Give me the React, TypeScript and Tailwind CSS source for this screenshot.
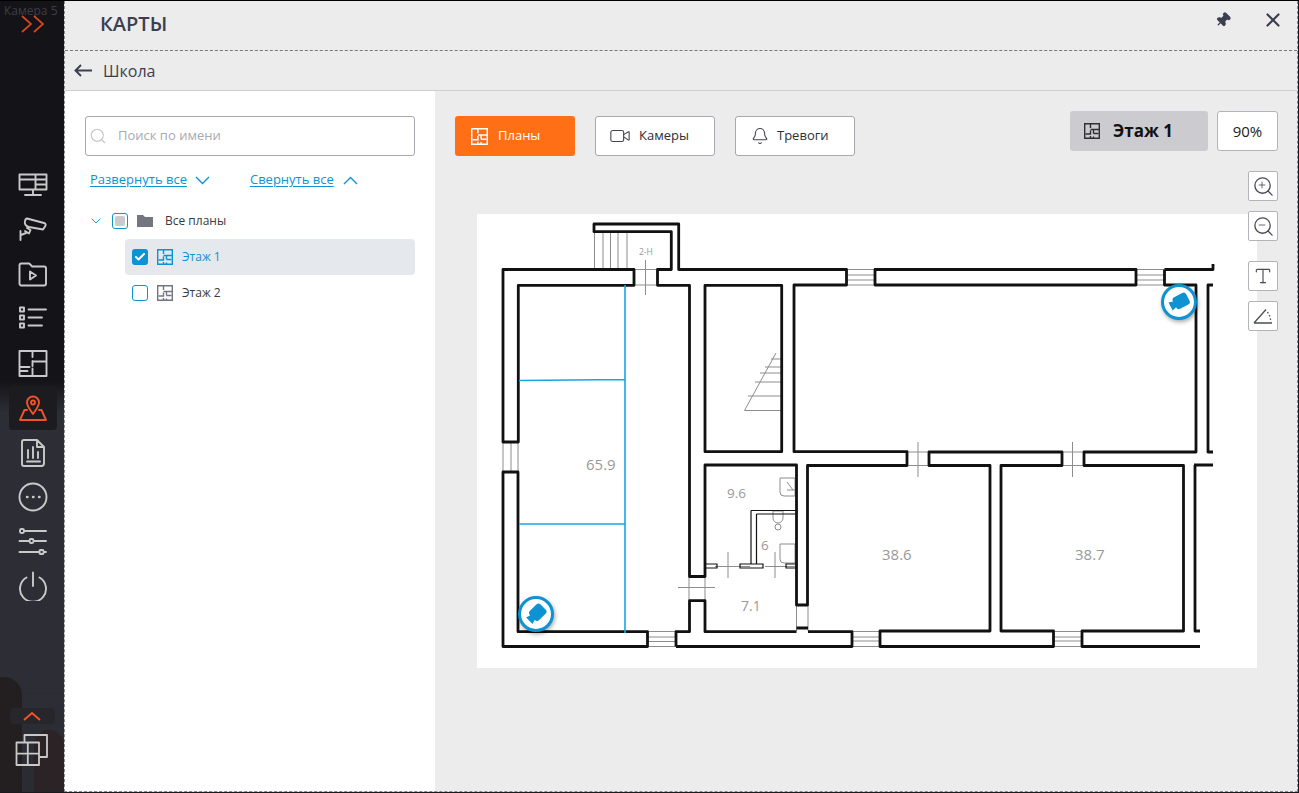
import { Bell, Check, Minus, Pin, Plus, Search, Type, Video, X } from "lucide-react";

const FONT = "font-['Open_Sans','Noto_Sans',sans-serif]";

// small floor plan glyph used on tabs, tree rows and the current plan badge
function PlanIcon({ className }: { className?: string }) {
  return (
    <svg viewBox="0 0 16 16" fill="none" stroke="currentColor" strokeWidth="1.4" className={className}>
      <path d="M.7.7h14.6v14.6H.7z" />
      <path d="M6.5 1v4M6.5 7.5V11H1.5M6.5 13v2M6.5 6.5h8.500M9.500 6.500v4M9.500 10.500h5M9.500 15v-1.500" />
    </svg>
  );
}

function Chevron({ up, className }: { up?: boolean; className?: string }) {
  return (
    <svg viewBox="0 0 15 9" fill="none" stroke="currentColor" strokeWidth="1.4" className={className}>
      <path d={up ? "M1 8l6.500-6.500L14 8" : "M1 1l6.500 6.500L14 1"} />
    </svg>
  );
}

function RailIcon({ children, active }: { children: React.ReactNode; active?: boolean }) {
  return (
    <div className={`flex h-[44.4px] w-12 items-center justify-center rounded ${active ? "bg-[#1b1b20] text-[#f0532a]" : "text-[#c9c9c9]"}`}>
      <svg viewBox="0 0 30 30" fill="none" stroke="currentColor" strokeWidth="1.9" strokeLinecap="round" strokeLinejoin="round" className="h-[30px] w-[30px]">
        {children}
      </svg>
    </div>
  );
}

function Rail() {
  return (
    <aside className="relative flex w-[64px] shrink-0 flex-col items-center overflow-hidden bg-[linear-gradient(180deg,#141418_0%,#141418_48%,#2d2e35_52%,#2d2e35_85%,#2b2c33_100%)]">
      <div className="absolute left-[4px] top-[2px] text-[12px] leading-[16px] text-[#3d3e44]">Камера 5</div>
      <svg viewBox="0 0 24 18" fill="none" stroke="#d9451f" strokeWidth="1.7" className="absolute left-[21px] top-[14px] h-[18px] w-[24px]">
        <path d="M1 1l9 8-9 8M13 1l9 8-9 8" />
      </svg>
      <div className="absolute bottom-0 left-0 h-[115px] w-[22px] rounded-tr-[18px] bg-[#231f20]" />
      <div className="absolute bottom-0 left-[34px] h-[62px] w-[30px] rounded-t-[24px] bg-[#2c2327]" />

      <div className="relative ml-[2px] mt-[163px] flex flex-col items-center">
        <RailIcon>
          <path d="M1.500 3.500h27v15h-27zM17.500 3.500v15M17.500 8.500h11M17.500 13.500h11M1.500 8.500h16M15 18.500v5M7 24h16" />
        </RailIcon>
        <RailIcon>
          <path d="M9 2.500l17 4.500c2 .6 2 2 1 3.500l-2 3-14-2.500c-3-.7-5-3-4-6 .3-1.300 1-2.500 2-2.500zM9 12l3.500 2-1.500 3.500-4-2.500M8 17l-5 2M2.500 15v9" />
        </RailIcon>
        <RailIcon>
          <path d="M1.500 5.500c0-1 .7-2 1.700-2h8l3 3h12c1 0 1.800 1 1.800 2v15c0 1-.8 2-1.800 2H3.200c-1 0-1.700-1-1.700-2zM12 11.500l6 4-6 4z" />
        </RailIcon>
        <RailIcon>
          <path d="M2 3.500h4v4H2zM2 11.500h4v4H2zM2 19.500h4v4H2zM10.500 5.500H28M10.500 13.500H24M10.500 21.500H24" />
        </RailIcon>
        <RailIcon>
          <path d="M1.500 2h27v25h-27zM14.500 2v6M14.500 12v5M14.500 19.500V27M14.500 12.500h14M1.500 18h10M1.500 22h8" />
        </RailIcon>
        <RailIcon active>
          <path d="M15 21c-3-4-6-8-6-11.500a6 6 0 0 1 12 0C21 13 18 17 15 21z" />
          <circle cx="15" cy="9.500" r="2" />
          <path d="M9 17H6.500L2 27h26l-4.500-10H21" />
        </RailIcon>
        <RailIcon>
          <path d="M4 4c0-1 .7-2 2-2h13l7 7v16c0 1.500-1 3-2.500 3H6c-1.300 0-2-1-2-2zM19 2v7h7M10 12v8M15 9v11M20 14v6M9 23.500h13" />
        </RailIcon>
        <RailIcon>
          <circle cx="15" cy="15" r="13.500" />
          <path d="M9 15h.5M15 15h.5M21 15h.5" strokeWidth="2.400" />
        </RailIcon>
        <RailIcon>
          <path d="M6.500 5H28M1.500 15h10M16 15h12M1.500 26h20M26 26h2" />
          <rect x="2" y="3" width="4" height="4" rx="1.500" />
          <rect x="11.500" y="13" width="4" height="4" rx="1.500" />
          <rect x="21.500" y="24" width="4" height="4" rx="1" />
        </RailIcon>
        <RailIcon>
          <path d="M15 1.500V15M8.500 6.500a13 13 0 1 0 13 0" />
        </RailIcon>
      </div>

      <div className="relative mt-auto mb-[26px] flex flex-col items-center">
        <div className="flex h-4 w-[45px] items-center justify-center rounded-sm bg-[#26262b]">
          <svg viewBox="0 0 18 10" fill="none" stroke="#f0532a" strokeWidth="2" className="h-[10px] w-[18px]">
            <path d="M1 9l8-7 8 7" />
          </svg>
        </div>
        <svg viewBox="0 0 34 33" fill="none" stroke="#c9c9c9" strokeWidth="1.800" strokeLinejoin="round" className="mt-[9px] h-[33px] w-[34px]">
          <path d="M9.500 9V2h22.500v22h-8" />
          <path d="M1.500 9.500h22.500v22.500H1.500zM12.800 9.500V32M1.500 20.700H24" />
        </svg>
      </div>
    </aside>
  );
}

function TreeCheck({ state }: { state: "on" | "off" | "mixed" }) {
  if (state === "on") {
    return (
      <span className="flex h-4 w-4 items-center justify-center rounded-[3px] bg-[#0d92d2] text-white">
        <Check className="h-3 w-3" strokeWidth={4} />
      </span>
    );
  }
  return (
    <span className="flex h-4 w-4 items-center justify-center rounded-[3px] border border-[#0d92d2] bg-white">
      {state === "mixed" && <span className="h-[10px] w-[10px] rounded-[2px] bg-[#c9c9cf]" />}
    </span>
  );
}

function TreePanel() {
  return (
    <div className="w-[370px] shrink-0 bg-white pl-5 pr-5 pt-[25px]">
      <div className="flex h-10 items-center rounded-[3px] border border-[#a8a8ae] px-[3px]">
        <Search className="h-[18px] w-[18px] text-[#c6c6c6]" strokeWidth={1.5} />
        <span className="ml-[11px] text-[13px] text-[#a9a9b0]">Поиск по имени</span>
      </div>
      <div className="mt-[14px] flex h-[20px] items-center pl-[5px] text-[13px] text-[#0d92d2]">
        <span className="underline underline-offset-2">Развернуть все</span>
        <Chevron className="ml-[8px] h-[9px] w-[15px]" />
        <span className="ml-[40px] underline underline-offset-2">Свернуть все</span>
        <Chevron up className="ml-[9px] h-[9px] w-[15px]" />
      </div>
      <div className="mt-[13px] text-[12px]">
        <div className="flex h-9 items-center">
          <Chevron className="ml-[6px] h-[6px] w-[10px] text-[#0d92d2]" />
          <span className="ml-[11px]"><TreeCheck state="mixed" /></span>
          <svg viewBox="0 0 16 12" className="ml-[9px] h-3 w-4" fill="#73757f">
            <path d="M0 0h6l2 2h8v10H0z" />
          </svg>
          <span className="ml-[12px] text-[#3a3a40]">Все планы</span>
        </div>
        <div className="ml-[40px] flex h-9 items-center rounded-sm bg-[#e5e8ed] pl-[7px] text-[#0d92d2]">
          <TreeCheck state="on" />
          <PlanIcon className="ml-[9px] h-4 w-4" />
          <span className="ml-[9px]">Этаж 1</span>
        </div>
        <div className="ml-[40px] flex h-9 items-center pl-[7px] text-[#3a3a40]">
          <TreeCheck state="off" />
          <PlanIcon className="ml-[9px] h-4 w-4 text-[#73757f]" />
          <span className="ml-[9px]">Этаж 2</span>
        </div>
      </div>
    </div>
  );
}

function TabButton({ label, icon, active }: { label: string; icon: React.ReactNode; active?: boolean }) {
  return (
    <div className={`flex h-10 w-[120px] items-center rounded-[3px] text-[13px] ${active ? "bg-[#ff6f16] text-white" : "border border-[#a8a8ae] bg-white text-[#2e2e33]"}`}>
      {icon}
      <span>{label}</span>
    </div>
  );
}

function ToolButton({ children }: { children: React.ReactNode }) {
  return (
    <div className="flex h-[30px] w-[30px] items-center justify-center rounded-[2px] border border-[#b4b4b8] bg-white text-[#4a4c59]">
      {children}
    </div>
  );
}

function CameraPin({ rotate }: { rotate: "left" | "right" }) {
  return (
    <div className="flex h-[36px] w-[36px] items-center justify-center rounded-full border-[3px] border-[#0d92d2] bg-white shadow-[1px_2px_4px_rgba(0,0,0,0.35)]">
      <svg viewBox="0 0 24 24" fill="#0d92d2" className={`h-6 w-6 ${rotate === "left" ? "rotate-[-45deg]" : "rotate-[-28deg]"}`}>
        <rect x="7" y="5.500" width="15" height="13" rx="3" />
        <path d="M8 9L2.500 7.500v9L8 15z" />
      </svg>
    </div>
  );
}

// plan coordinates are page pixels, the viewBox starts at the sheet origin (477, 214)
function FloorPlan() {
  return (
    <div className="relative h-[454px] w-[780px] bg-white">
      <svg viewBox="477 214 780 454" className="h-[454px] w-[780px]" fill="none">
        {/* thin grey: windows, stairs, door marks */}
        <g stroke="#8d8d8d" strokeWidth="1">
          <path d="M594.500 232v37M603 232v37M610.500 232v37M618 232v37M627 232v37" />
          <path d="M634 269.500h23.500M634 285h23.500M645.500 260v35" />
          <path d="M503 442v30M511 442v30M518 442v30" />
          <path d="M647 631.500h29M647 637h29M647 641.500h29M647 646.500h29" />
          <path d="M846 269.500h28.500M846 275h28.500M846 280h28.500M846 285h28.500" />
          <path d="M1136 269.500h28M1136 275h28M1136 280h28M1136 285h28" />
          <path d="M852 631.500h28M852 637h28M852 641h28M852 646.500h28" />
          <path d="M1053.500 631.500h28.500M1053.500 637h28.500M1053.500 641h28.500M1053.500 646.500h28.500" />
          <path d="M907 452h22M907 465.500h22M918 442v35" />
          <path d="M1062 452h22M1062 465.500h22M1072.500 442v35" />
          <path d="M689 576.500v24M705 576.500v24M678 587.500h37" />
          <path d="M715 566.500h35M765 566.500h31M728 552v26M775 552v26" />
          <path d="M796.500 605v26M808 605v26" />
          <path d="M744.500 410.500L776 353M781 410.500h-36.500M748 396h33M755 382h26M760 373h21M765 367h16M771 359h10" />
          <path d="M773 511h10v7a5 5 0 0 1-10 0zM780 478h15v18h-11a4 4 0 0 1-4-4zM780 544h15v19h-11a4 4 0 0 1-4-4zM787 482l6 8M787 490h8" />
          <circle cx="778" cy="527" r="3" />
        </g>
        {/* walls */}
        <g stroke="#111" strokeWidth="2.800" strokeLinejoin="round">
          <path d="M594 224h84.700v45.500H846.500V285H794v166.700h113V465.500h-99.500V605h-11V465H705V576.500H689.500V285.300h-32V269.500h13.800V231.700H594z" />
          <path d="M503 269.500h131V285.300H518.300V442H503z" />
          <path d="M875 269.500h261V285H875z" />
          <path d="M1164.500 269.500H1213V264M1164.500 269.500V285H1196V452H1084V465.500H1183.500V631H1082V646.500H1200M1062 452H929V465.500H990V631H880V646.500H1053.500V631H1001V465.500H1062z" />
          <path d="M705 285.300h76.700v166.400H705z" />
          <path d="M1213 285h-5V452h5M1194 465h19M1195 465V631h5" />
          <path d="M503 472h15V631.700h129.500V646.500H503z" />
          <path d="M676 646.500V631.700h13.500V600.700H705V631.700h91.500M796.500 628h11.500M808 631.700h44V646.500H676" />
        </g>
        <g stroke="#111" strokeWidth="1.200">
          <path d="M751 510.500h45.500M751 510.500V564M756.500 514H796M756.500 514V564" />
          <path d="M705 564h12v4h-12zM740 564h23v4h-23zM786 564h10.500v4H786z" />
        </g>
        {/* blue partitions */}
        <path d="M625 285v348M519 380.500l106-1M519 524h106" stroke="#16a6e8" strokeWidth="1.600" />
        <g fill="#999" className={FONT}>
          <text x="586" y="470" fontSize="15">65.9</text>
          <text x="727" y="498" fontSize="13.500">9.6</text>
          <text x="761" y="550" fontSize="13.500">6</text>
          <text x="741" y="611" fontSize="14">7.1</text>
          <text x="882" y="560" fontSize="15">38.6</text>
          <text x="1075" y="560" fontSize="15">38.7</text>
          <text x="639" y="255" fontSize="8.500">2-H</text>
        </g>
      </svg>
      <div className="absolute left-[41px] top-[382px]"><CameraPin rotate="left" /></div>
      <div className="absolute left-[684px] top-[70px]"><CameraPin rotate="right" /></div>
    </div>
  );
}

function PlanPanel() {
  return (
    <div className="relative flex-1 bg-[#ececec] pl-5 pt-[25px]">
      <div className="flex items-start">
        <div className="flex gap-5">
          <TabButton active label="Планы" icon={<PlanIcon className="ml-[16px] mr-[10px] h-[17px] w-[17px]" />} />
          <TabButton label="Камеры" icon={<Video className="ml-[13px] mr-[8px] h-[22px] w-[22px] text-[#44464f]" strokeWidth={1.2} />} />
          <TabButton label="Тревоги" icon={<Bell className="ml-[15px] mr-[8px] h-[18px] w-[18px] text-[#44464f]" strokeWidth={1.5} />} />
        </div>
        <div className="-mt-[5px] ml-auto mr-[19px] flex items-center gap-[9px]">
          <div className="flex h-10 w-[138px] items-center rounded-[3px] bg-[#cbcbd0] pl-[14px] text-[17px] font-bold text-[#111]">
            <PlanIcon className="h-4 w-4 text-[#2e2e33]" />
            <span className="ml-[13px]">Этаж 1</span>
          </div>
          <div className="flex h-10 w-[61px] items-center justify-center rounded-[3px] border border-[#b4b4b8] bg-white text-[15px] text-[#222]">90%</div>
        </div>
      </div>
      <div className="ml-[22px] mt-[58px]">
        <FloorPlan />
      </div>
      <div className="absolute right-[19px] top-[80px] flex flex-col">
        <ToolButton>
          <span className="relative flex">
            <Search className="h-[23px] w-[23px]" strokeWidth={1.4} />
            <Plus className="absolute left-[5px] top-[5px] h-[10px] w-[10px]" strokeWidth={2} />
          </span>
        </ToolButton>
        <div className="mt-[10px]">
          <ToolButton>
            <span className="relative flex">
              <Search className="h-[23px] w-[23px]" strokeWidth={1.4} />
              <Minus className="absolute left-[5px] top-[5px] h-[10px] w-[10px]" strokeWidth={2} />
            </span>
          </ToolButton>
        </div>
        <div className="mt-[20px]">
          <ToolButton><Type className="h-[20px] w-[20px]" strokeWidth={1.4} /></ToolButton>
        </div>
        <div className="mt-[10px]">
          <ToolButton>
            <svg viewBox="0 0 20 16" fill="none" stroke="currentColor" strokeWidth="1.300" className="h-4 w-5">
              <path d="M1 15L13 1.500M1 15h18" />
              <path d="M14.500 4l2.500 4.500 1 5.500" strokeDasharray="1.500 2" />
            </svg>
          </ToolButton>
        </div>
      </div>
    </div>
  );
}

export default function App() {
  return (
    <div className={`flex h-[793px] w-[1299px] overflow-hidden border-t border-black bg-[#1a1a1e] pb-px pr-px ${FONT}`}>
      <Rail />
      <main className="flex min-w-0 flex-1 flex-col border-b border-l border-r border-dashed border-[#8a8a8a] bg-[#ececec]">
        <header className="flex h-[50px] shrink-0 items-center border-b border-dashed border-[#77777c] pl-[35px] pr-[13px]">
          <h1 className="-mt-[4px] text-[20px] font-semibold text-[#3c3f50]">КАРТЫ</h1>
          <Pin className="-mt-[12px] ml-auto h-[16px] w-[16px] rotate-45 fill-[#3c3f50] text-[#3c3f50]" strokeWidth={2} />
          <X className="-mt-[12px] ml-[31px] h-[22px] w-[22px] text-[#3c3f50]" strokeWidth={2.4} />
        </header>
        <div className="flex h-[40px] shrink-0 items-center border-b border-[#cfcfcf] pl-[9px] text-[16px] text-[#3c3f50]">
          <svg viewBox="0 0 18 13" fill="none" stroke="currentColor" strokeWidth="1.900" className="h-[13px] w-[18px]">
            <path d="M18 6.500H1.500M7 1L1.500 6.500 7 12" />
          </svg>
          <span className="ml-[11px]">Школа</span>
        </div>
        <div className="flex min-h-0 flex-1">
          <TreePanel />
          <PlanPanel />
        </div>
      </main>
    </div>
  );
}
